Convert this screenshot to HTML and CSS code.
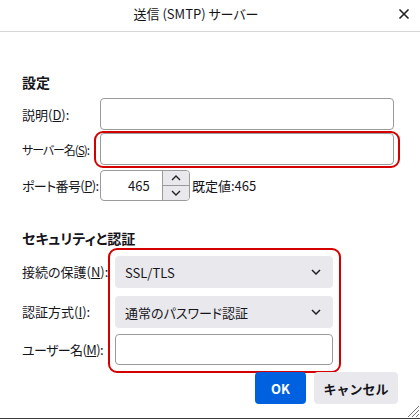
FILE: index.html
```html
<!DOCTYPE html>
<html lang="ja">
<head>
<meta charset="utf-8">
<link rel="stylesheet" href="styles.css">
</head>
<body>
<div class="window">
  <header class="titlebar">
    <div class="title">送信 (SMTP) サーバー</div>
    <div class="close">
      <svg width="12" height="12" viewBox="0 0 12 12"><path d="M1.5 1.5 L10.5 10.5 M10.5 1.5 L1.5 10.5" stroke="#222" stroke-width="1.6" fill="none"/></svg>
    </div>
  </header>
  <main class="content">
    <h2 class="heading">設定</h2>
    <div class="row r1">
      <label class="lbl">説明(<u>D</u>):</label>
      <div class="textbox wide"></div>
    </div>
    <div class="row r2">
      <label class="lbl tight">サーバー名(<u>S</u>):</label>
      <div class="hl hl-one"><div class="textbox wide"></div></div>
    </div>
    <div class="row r3">
      <label class="lbl semi">ポート番号(<u>P</u>):</label>
      <div class="port">
        <div class="portval">465</div>
        <div class="spin">
          <div class="spinbtn up"><svg width="10" height="6" viewBox="0 0 10 6"><path d="M1 5 L5 1 L9 5" stroke="#222" stroke-width="1.4" fill="none"/></svg></div>
          <div class="spinbtn"><svg width="10" height="6" viewBox="0 0 10 6"><path d="M1 1 L5 5 L9 1" stroke="#222" stroke-width="1.4" fill="none"/></svg></div>
        </div>
      </div>
      <span class="def">既定値:465</span>
    </div>

    <h2 class="heading h2b">セキュリティと認証</h2>
    <div class="secgrid">
      <div class="labels">
        <label class="lbl l1">接続の保護(<u>N</u>):</label>
        <label class="lbl l2">認証方式(<u>I</u>):</label>
        <label class="lbl l3 semi">ユーザー名(<u>M</u>):</label>
      </div>
      <div class="hl hl-two">
        <div class="select"><span>SSL/TLS</span><svg width="10" height="6" viewBox="0 0 10 6"><path d="M1 1 L5 5 L9 1" stroke="#222" stroke-width="1.5" fill="none"/></svg></div>
        <div class="select s2"><span>通常のパスワード認証</span><svg width="10" height="6" viewBox="0 0 10 6"><path d="M1 1 L5 5 L9 1" stroke="#222" stroke-width="1.5" fill="none"/></svg></div>
        <div class="textbox user"></div>
      </div>
    </div>
    <div class="buttons">
      <button class="btn ok">OK</button>
      <button class="btn cancel">キャンセル</button>
    </div>
  </main>
  <svg class="grip" width="12" height="12" viewBox="0 0 12 12"><path d="M12 1 L1 12 M12 5 L5 12 M12 9 L9 12" stroke="#777" stroke-width="1" fill="none"/></svg>
</div>
</body>
</html>
```
FILE: styles.css
```css
* { box-sizing: border-box; }
html, body { margin: 0; padding: 0; background: #fff; }
body {
  font-family: "Noto Sans CJK JP", "Noto Sans", sans-serif;
  font-size: 13px;
  color: #15141a;
  font-feature-settings: "palt";
}
.window {
  position: relative;
  width: 420px;
  height: 419px;
  border-bottom: 1px solid #3a3a3a;
  overflow: hidden;
}
.titlebar {
  display: flex;
  height: 32px;
  border-bottom: 1px solid #d6d6d6;
}
.title {
  flex: 1;
  text-align: center;
  line-height: 28px;
  font-size: 13px;
  padding-right: 6px;
}
.close {
  width: 22px;
  display: flex;
  justify-content: flex-start;
  padding-top: 8px;
}
.content {
  padding: 40px 22px 0 22px;
}
.heading {
  margin: 0;
  font-size: 14px;
  font-weight: bold;
  line-height: 20px;
}
.row {
  display: flex;
  align-items: center;
}
.r1 { margin-top: 6px; }
.r2 { margin-top: 1px; }
.r3 { margin-top: 2px; }
.lbl {
  width: 78px;
  flex-shrink: 0;
  white-space: nowrap;
  font-size: 13px;
}
.tight { font-size: 12px; letter-spacing: -1.1px; }
.semi { letter-spacing: -0.6px; }
.textbox {
  border: 1px solid #9a9a9a;
  border-radius: 4px;
  background: #fff;
}
.wide { width: 294px; height: 32px; flex-shrink: 0; }
.hl {
  border: 2px solid #d40000;
  border-radius: 9px;
}
.hl-one {
  margin-left: -6px;
  margin-right: -8px;
  padding: 0 4px 1px 4px;
  flex-shrink: 0;
}
.port {
  display: flex;
  width: 90px;
  height: 31px;
  border: 1px solid #9a9a9a;
  border-radius: 4px;
  overflow: hidden;
}
.portval {
  width: 62px;
  text-align: right;
  padding-right: 12px;
  line-height: 29px;
}
.spin {
  display: flex;
  flex-direction: column;
  width: 28px;
  border-left: 1px solid #9a9a9a;
}
.spinbtn {
  flex: 1;
  background: #e9e9ed;
  display: flex;
  align-items: center;
  justify-content: center;
}
.spinbtn.up { border-bottom: 1px solid #9a9a9a; }
.def { margin-left: 2px; }
.h2b { margin-top: 27px; }
.secgrid {
  display: flex;
}
.labels {
  width: 86px;
  display: flex;
  flex-direction: column;
  padding-top: 8px;
}
.labels .lbl { line-height: 32px; height: 32px; }
.labels .l2 { margin-top: 8px; }
.labels .l3 { margin-top: 6px; height: 31px; line-height: 31px; }
.hl-two {
  width: 233px;
  padding: 6px 6px 6px 5px;
  display: flex;
  flex-direction: column;
}
.select {
  height: 32px;
  background: #e9e9ed;
  border-radius: 4px;
  display: flex;
  align-items: center;
  justify-content: space-between;
  padding: 0 12px 0 10px;
}
.s2 { margin-top: 8px; }
.user { margin-top: 6px; height: 31px; }
.buttons {
  display: flex;
  justify-content: flex-end;
  gap: 8px;
  margin-top: -1px;
}
.btn {
  height: 32px;
  border: none;
  border-radius: 4px;
  font-family: inherit;
  font-size: 13px;
  font-weight: bold;
  padding: 0;
}
.ok { width: 51px; background: #0061e0; color: #fff; }
.cancel { width: 84px; background: #e9e9ed; color: #15141a; }
.grip {
  position: absolute;
  right: 1px;
  bottom: 1px;
}
```
